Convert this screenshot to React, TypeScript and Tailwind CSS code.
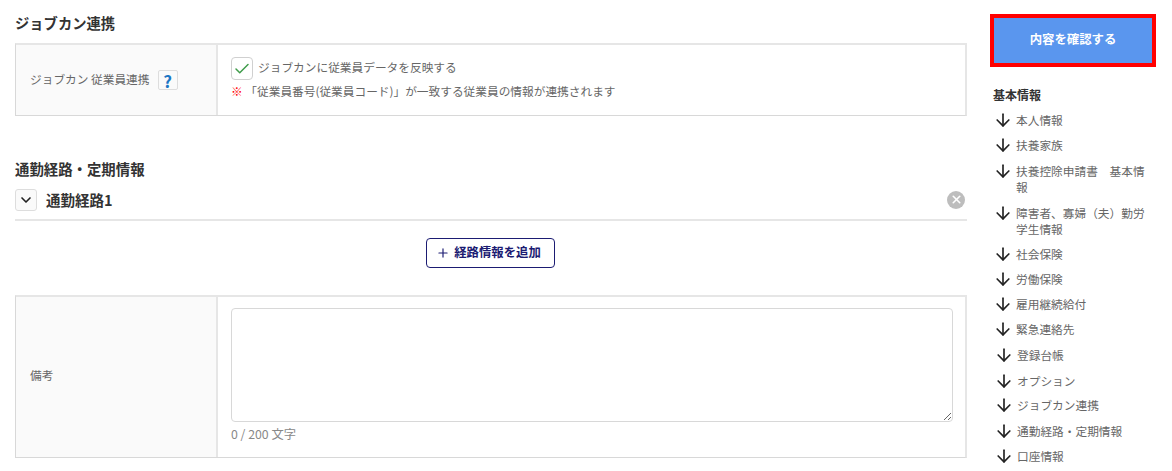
import { ArrowDown, Check, ChevronDown, Plus, X } from "lucide-react";

const sideLinks = [
  { label: "本人情報", cls: "mt-[7px]" },
  { label: "扶養家族", cls: "mt-[9px]" },
  { label: "扶養控除申請書　基本情報", cls: "mt-[10px]" },
  { label: "障害者、寡婦（夫）勤労学生情報", cls: "mt-[10px]" },
  { label: "社会保険", cls: "mt-[9px]" },
  { label: "労働保険", cls: "mt-[9px]" },
  { label: "雇用継続給付", cls: "mt-[9px]" },
  { label: "緊急連絡先", cls: "mt-[9px]" },
  { label: "登録台帳", cls: "mt-[10px] ml-px" },
  { label: "オプション", cls: "mt-[10px] ml-px" },
  { label: "ジョブカン連携", cls: "mt-[8px] ml-px" },
  { label: "通勤経路・定期情報", cls: "mt-[10px] ml-px" },
  { label: "口座情報", cls: "mt-[9px] ml-px" },
];

export default function App() {
  return (
    <div className="h-[471px] w-[1172px] overflow-hidden bg-white font-['Noto_Sans_CJK_JP','Noto_Sans',sans-serif] text-[11.7px] text-[#666]">
      <div className="flex items-start">
        {/* Main form */}
        <div className="ml-[15px] w-[952px] pt-[14px]">
          <h2 className="text-[14.3px] leading-[18px] font-bold text-[#333]">ジョブカン連携</h2>

          <div className="mt-[11px] flex h-[73px] border-t-2 border-r-2 border-b border-l border-t-[#e6e6e6] border-r-[#e6e6e6] border-b-[#d8d8d8] border-l-[#d8d8d8]">
            <div className="flex w-[202px] items-center border-r-2 border-[#e6e6e6] bg-[#fafafa] pb-[2px] pl-[14px]">
              <span>ジョブカン 従業員連携</span>
              <span className="mt-[2px] ml-[8px] flex h-[20px] w-[20px] items-center justify-center rounded-[2px] border border-[#ddd] text-[17px] leading-none font-bold text-[#1c76c4]">?</span>
            </div>
            <div className="pt-[12px] pl-[13px]">
              <div className="flex items-center">
                <span className="flex h-[23px] w-[22px] items-center justify-center rounded-[4px] border border-[#d0d0d0]">
                  <Check className="h-[18px] w-[18px] text-[#3f9c4a]" strokeWidth={2} />
                </span>
                <span className="mb-[3px] ml-[5px]">ジョブカンに従業員データを反映する</span>
              </div>
              <p className="mt-[2px] leading-[18px]">
                <span className="font-bold text-[#f00]">※</span> 「従業員番号(従業員コード)」が一致する従業員の情報が連携されます
              </p>
            </div>
          </div>

          <h2 className="mt-[44px] text-[14.4px] leading-[18px] font-bold text-[#333]">通勤経路・定期情報</h2>

          <div className="mt-[10px] flex h-[33px] items-center border-b-2 border-[#e6e6e6] pb-[8px]">
            <span className="flex h-[22px] w-[22px] items-center justify-center rounded-[3px] border border-[#ddd] bg-[#fafafa]">
              <ChevronDown className="h-[16px] w-[16px] text-[#222]" strokeWidth={2.5} />
            </span>
            <span className="ml-[9px] text-[14.5px] font-bold text-[#333]">通勤経路1</span>
            <span className="mr-[2px] ml-auto flex h-[18px] w-[18px] items-center justify-center rounded-full bg-[#bdbdbd]">
              <X className="h-[13px] w-[13px] text-white" strokeWidth={3} />
            </span>
          </div>

          <div className="mt-[17px] flex justify-center pr-[2px]">
            <button className="flex h-[30px] w-[129px] items-center justify-center rounded-[4px] border border-[#1b1b72] pr-[3px] text-[12.4px] font-bold text-[#1b1b72]">
              <Plus className="mr-[4px] h-[14px] w-[14px]" strokeWidth={2} />
              <span className="mb-[1px]">経路情報を追加</span>
            </button>
          </div>

          <div className="mt-[27px] flex h-[163px] border-t-2 border-r-2 border-b border-l border-t-[#e6e6e6] border-r-[#e6e6e6] border-b-[#d8d8d8] border-l-[#d8d8d8]">
            <div className="flex w-[202px] items-center border-r-2 border-[#e6e6e6] bg-[#fafafa] pb-[5px] pl-[14px]">備考</div>
            <div className="flex-1 pt-[11px] pr-[12px] pl-[13px]">
              <textarea className="block h-[114px] w-full rounded-[4px] border border-[#d8d8d8] bg-white" />
              <p className="mt-[3px] text-[12.3px] leading-[18px] text-[#888]">0 / 200 文字</p>
            </div>
          </div>
        </div>

        {/* Side nav */}
        <div className="ml-[23px] w-[166px] pt-[14px]">
          <button className="h-[53px] w-full border-[4px] border-[#f00] bg-[#5a96ee] pb-[2px] text-[12.4px] font-bold text-white">内容を確認する</button>
          <h3 className="mt-[18px] pl-[3px] text-[12px] leading-[20px] font-bold text-[#333]">基本情報</h3>
          <ul>
            {sideLinks.map((item) => (
              <li key={item.label} className={"flex items-start " + item.cls}>
                <ArrowDown className="-my-[2px] ml-[3px] h-[20px] w-[20px] shrink-0 text-[#222]" strokeWidth={2} />
                <span className="ml-[3px] w-[132px] leading-[16px]">{item.label}</span>
              </li>
            ))}
          </ul>
        </div>
      </div>
    </div>
  );
}
